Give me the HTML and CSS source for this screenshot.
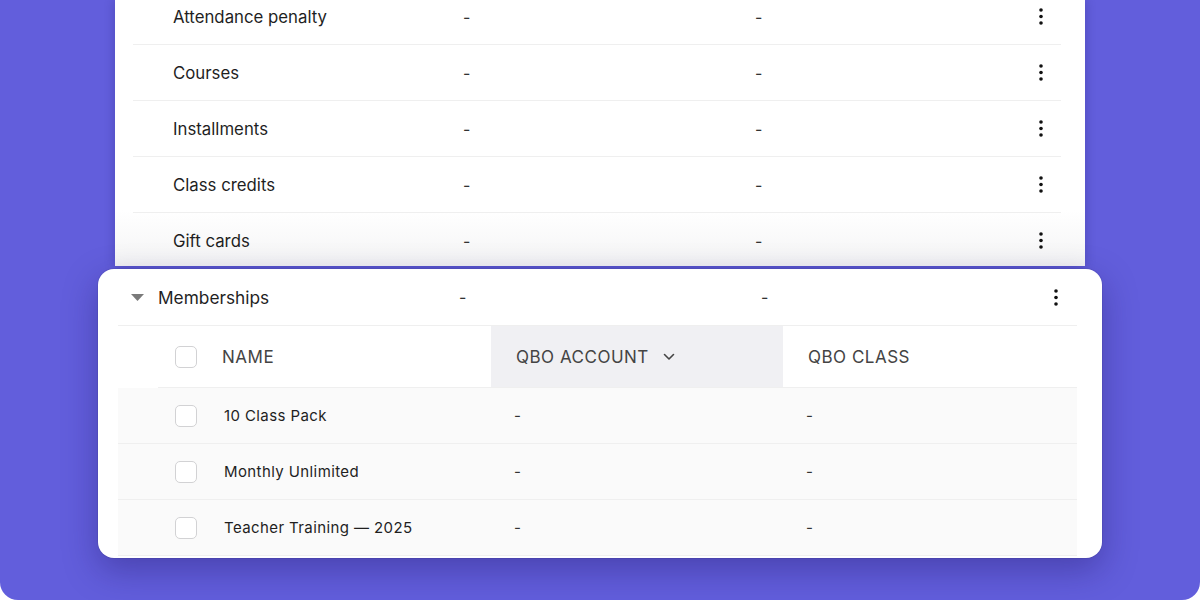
FILE: index.html
```html
<!DOCTYPE html>
<html>
<head>
<meta charset="utf-8">
<link rel="stylesheet" href="styles.css">
</head>
<body>
<div class="canvas">
  <div class="back-card">
    <div class="back-rows">
      <div class="row"><span class="name">Attendance penalty</span><span class="dash">-</span><span class="dash">-</span><svg class="kebab" width="4" height="17" viewBox="0 0 4 17"><circle cx="2" cy="2" r="1.8"/><circle cx="2" cy="8.5" r="1.8"/><circle cx="2" cy="15" r="1.8"/></svg></div>
      <div class="row"><span class="name">Courses</span><span class="dash">-</span><span class="dash">-</span><svg class="kebab" width="4" height="17" viewBox="0 0 4 17"><circle cx="2" cy="2" r="1.8"/><circle cx="2" cy="8.5" r="1.8"/><circle cx="2" cy="15" r="1.8"/></svg></div>
      <div class="row"><span class="name">Installments</span><span class="dash">-</span><span class="dash">-</span><svg class="kebab" width="4" height="17" viewBox="0 0 4 17"><circle cx="2" cy="2" r="1.8"/><circle cx="2" cy="8.5" r="1.8"/><circle cx="2" cy="15" r="1.8"/></svg></div>
      <div class="row"><span class="name">Class credits</span><span class="dash">-</span><span class="dash">-</span><svg class="kebab" width="4" height="17" viewBox="0 0 4 17"><circle cx="2" cy="2" r="1.8"/><circle cx="2" cy="8.5" r="1.8"/><circle cx="2" cy="15" r="1.8"/></svg></div>
      <div class="row"><span class="name">Gift cards</span><span class="dash">-</span><span class="dash">-</span><svg class="kebab" width="4" height="17" viewBox="0 0 4 17"><circle cx="2" cy="2" r="1.8"/><circle cx="2" cy="8.5" r="1.8"/><circle cx="2" cy="15" r="1.8"/></svg></div>
    </div>
  </div>

  <div class="front-card">
    <div class="group-row">
      <svg class="caret" width="13" height="7" viewBox="0 0 13 7"><path d="M0 0H13L6.5 7Z"/></svg>
      <span class="group-name">Memberships</span>
      <span class="dash">-</span>
      <span class="dash">-</span>
      <svg class="kebab" width="4" height="17" viewBox="0 0 4 17"><circle cx="2" cy="2" r="1.8"/><circle cx="2" cy="8.5" r="1.8"/><circle cx="2" cy="15" r="1.8"/></svg>
    </div>
    <div class="thead">
      <div class="th th-name"><span class="check"></span><span>NAME</span></div>
      <div class="th th-active"><span>QBO ACCOUNT</span><svg class="chev" width="12" height="8" viewBox="0 0 12 8"><path d="M1.5 1.5L6 6L10.5 1.5"/></svg></div>
      <div class="th th-class"><span>QBO CLASS</span></div>
    </div>
    <div class="tbody">
      <div class="tr"><div class="td td-name"><span class="check"></span><span>10 Class Pack</span></div><div class="td">-</div><div class="td">-</div></div>
      <div class="tr"><div class="td td-name"><span class="check"></span><span>Monthly Unlimited</span></div><div class="td">-</div><div class="td">-</div></div>
      <div class="tr"><div class="td td-name"><span class="check"></span><span>Teacher Training — 2025</span></div><div class="td">-</div><div class="td">-</div></div>
    </div>
  </div>
</div>
</body>
</html>
```

FILE: styles.css
```css
* { box-sizing: border-box; }
html, body { margin: 0; padding: 0; background: #ffffff; }
body { font-family: Inter, "Noto Sans", sans-serif; color: #1f1f1f; }

.canvas {
  width: 1200px;
  height: 600px;
  background: #625edc;
  border-radius: 0 0 18px 18px;
  overflow: hidden;
  display: flex;
  flex-direction: column;
}

.back-card {
  margin-left: 115px;
  width: 970px;
  height: 266px;
  flex: none;
  overflow: hidden;
  background: linear-gradient(to bottom, #ffffff 0, #ffffff 210px, #f4f4f5 266px);
  box-shadow: 0 0 10px rgba(20, 10, 80, 0.25);
  padding: 0 24px 0 18px;
}

.back-rows { margin-top: -11px; }

.row {
  height: 56px;
  display: grid;
  grid-template-columns: 290px 292px 1fr 4px;
  align-items: center;
  padding: 0 18px 0 40px;
  border-bottom: 1px solid #efefef;
  font-size: 16.8px;
  color: #1f1f1f;
}

.dash { color: #333; font-size: 16px; }

.kebab { fill: #111; display: block; }

.front-card {
  margin-top: 3px;
  margin-left: 98px;
  width: 1004px;
  height: 289px;
  flex: none;
  background: #ffffff;
  border-radius: 16px;
  box-shadow: 0 0 0 1px rgba(0, 0, 0, 0.06), 0 12px 34px rgba(25, 15, 90, 0.35);
  padding: 0 25px 0 20px;
  overflow: hidden;
}

.group-row {
  height: 57px;
  display: grid;
  grid-template-columns: 27px 301px 302px 1fr 4px;
  align-items: center;
  padding: 0 19px 0 13px;
  border-bottom: 1px solid #efefef;
}

.caret { fill: #7a7a7a; display: block; }
.group-name { font-size: 17.3px; color: #1f1f1f; }

.thead {
  margin-left: 40px;
  height: 62px;
  display: grid;
  grid-template-columns: 333px 292px 1fr;
  border-bottom: 1px solid #efefef;
  font-size: 17px;
  letter-spacing: 0.5px;
  color: #444444;
}

.th { display: flex; align-items: center; }
.th-name { padding-left: 17px; gap: 25px; }
.th-active { background: #f0f0f3; padding-left: 25px; gap: 14px; }
.th-class { padding-left: 25px; }

.chev { fill: none; stroke: #444; stroke-width: 1.6; stroke-linecap: round; stroke-linejoin: round; display: block; }

.check {
  width: 22px;
  height: 22px;
  border: 1.5px solid #d2d2d4;
  border-radius: 5px;
  background: #ffffff;
  flex: none;
}

.tr {
  height: 56px;
  display: grid;
  grid-template-columns: 373px 292px 1fr;
  background: #fafafa;
  border-bottom: 1px solid #efefef;
  font-size: 15px;
  letter-spacing: 0.4px;
  color: #1f1f1f;
}

.td { display: flex; align-items: center; padding-left: 23px; color: #333; }
.td-name { padding-left: 57px; gap: 27px; color: #1f1f1f; }
```
